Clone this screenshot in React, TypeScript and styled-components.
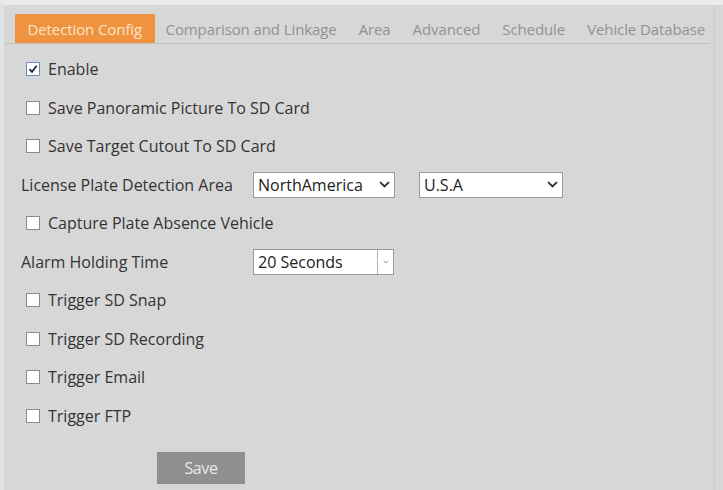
import React from "react";
import styled, { createGlobalStyle } from "styled-components";

const Global = createGlobalStyle`
  html, body { margin: 0; padding: 0; background: #d7d7d7; }
  body { font-family: "Open Sans", "Noto Sans", sans-serif; }
`;

const Frame = styled.div`
  width: 723px;
  height: 490px;
  box-sizing: border-box;
  background: #d7d7d7;
  border-top: 5px solid #ebebeb;
  border-left: 4px solid #e2e2e2;
  display: flex;
  flex-direction: column;
  position: relative;
  overflow: hidden;
`;

const RightEdge = styled.div`
  position: absolute;
  top: 0;
  bottom: 0;
  left: 710px;
  width: 1px;
  background: #cdcdcd;
`;

const TabBar = styled.div`
  display: flex;
  align-items: stretch;
  height: 29px;
  margin-top: 9px;
  padding-left: 11px;
  margin-right: 13px;
  border-bottom: 1px solid #c2c2c2;
`;

const Tab = styled.div<{ $active?: boolean }>`
  display: flex;
  align-items: center;
  padding: 0 ${(p) => (p.$active ? "12.5px" : "11px")};
  font-size: 15px;
  letter-spacing: -0.1px;
  color: ${(p) => (p.$active ? "#fbe3c8" : "#929292")};
  background: ${(p) => (p.$active ? "#ef9340" : "transparent")};
  white-space: nowrap;
`;

const Content = styled.div`
  display: flex;
  flex-direction: column;
  padding-top: 6px;
`;

const Row = styled.div<{ $indent?: number }>`
  height: 38.5px;
  display: flex;
  align-items: center;
  padding-left: ${(p) => p.$indent ?? 22}px;
  font-size: 16px;
  color: #333;
`;

const Box = styled.span<{ $checked?: boolean }>`
  width: 12px;
  height: 12px;
  border: 1px solid ${(p) => (p.$checked ? "#6d90b8" : "#8a8a8a")};
  background: #fff;
  margin-right: 8px;
  display: inline-flex;
  align-items: center;
  justify-content: center;
  flex-shrink: 0;
`;

const Label = styled.span<{ $w?: number }>`
  width: ${(p) => (p.$w ? `${p.$w}px` : "auto")};
  flex-shrink: 0;
`;

const Select = styled.div<{ $w: number; $ml?: number }>`
  width: ${(p) => p.$w}px;
  height: 26px;
  box-sizing: border-box;
  margin-left: ${(p) => p.$ml ?? 0}px;
  background: #fff;
  border: 1px solid #9a9a9a;
  display: flex;
  align-items: center;
  justify-content: space-between;
  padding-left: 4px;
  font-size: 16px;
  color: #222;
`;

const Arrow = styled.span`
  width: 20px;
  display: flex;
  justify-content: center;
  align-items: center;
`;

const SmallArrow = styled.span`
  width: 15px;
  align-self: stretch;
  border-left: 1px solid #b5b5b5;
  display: flex;
  justify-content: center;
  align-items: center;
`;

const SaveRow = styled.div`
  padding-left: 153px;
  padding-top: 17px;
`;

const SaveButton = styled.button`
  width: 88px;
  height: 32px;
  border: none;
  background: #8f8f8f;
  color: #e8e8e8;
  font-family: "Open Sans", sans-serif;
  font-size: 16px;
  letter-spacing: -0.4px;
`;

const Check = () => (
  <svg width="10" height="10" viewBox="0 0 10 10">
    <path d="M1.5 5.2 L4 7.8 L8.6 1.8" fill="none" stroke="#1f2a36" strokeWidth="1.8" />
  </svg>
);

const Chevron = ({ size = 11, color = "#333", sw = 1.7 }: { size?: number; color?: string; sw?: number }) => (
  <svg width={size} height={size * 0.6} viewBox="0 0 10 6">
    <path d="M1 1 L5 5 L9 1" fill="none" stroke={color} strokeWidth={sw} />
  </svg>
);

const CheckRow = ({ label, checked }: { label: string; checked?: boolean }) => (
  <Row>
    <Box $checked={checked}>{checked && <Check />}</Box>
    {label}
  </Row>
);

export default function App() {
  const tabs = ["Detection Config", "Comparison and Linkage", "Area", "Advanced", "Schedule", "Vehicle Database"];
  return (
    <>
      <Global />
      <Frame>
        <RightEdge />
        <TabBar>
          {tabs.map((t, i) => (
            <Tab key={t} $active={i === 0}>
              {t}
            </Tab>
          ))}
        </TabBar>
        <Content>
          <CheckRow label="Enable" checked />
          <CheckRow label="Save Panoramic Picture To SD Card" />
          <CheckRow label="Save Target Cutout To SD Card" />
          <Row $indent={17}>
            <Label $w={232}>License Plate Detection Area</Label>
            <Select $w={142}>
              NorthAmerica
              <Arrow>
                <Chevron />
              </Arrow>
            </Select>
            <Select $w={144} $ml={24}>
              U.S.A
              <Arrow>
                <Chevron />
              </Arrow>
            </Select>
          </Row>
          <CheckRow label="Capture Plate Absence Vehicle" />
          <Row $indent={17}>
            <Label $w={232}>Alarm Holding Time</Label>
            <Select $w={141}>
              20 Seconds
              <SmallArrow>
                <Chevron size={6} color="#888" sw={1.4} />
              </SmallArrow>
            </Select>
          </Row>
          <CheckRow label="Trigger SD Snap" />
          <CheckRow label="Trigger SD Recording" />
          <CheckRow label="Trigger Email" />
          <CheckRow label="Trigger FTP" />
          <SaveRow>
            <SaveButton>Save</SaveButton>
          </SaveRow>
        </Content>
      </Frame>
    </>
  );
}
